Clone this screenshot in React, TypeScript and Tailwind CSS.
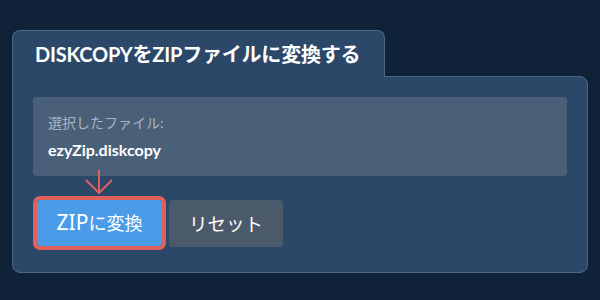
import React from "react";

const FONT = { fontFamily: "Lato, 'Noto Sans CJK JP', sans-serif" };
const BTN = { fontFamily: "'Noto Sans', 'Noto Sans CJK JP', sans-serif" };

export default function App() {
  return (
    <div className="h-[300px] w-[600px] bg-[#0f2238] pt-[30px] pl-[12px]" style={FONT}>
      <div className="w-[576px]">
        {/* tab */}
        <div className="relative z-10 -mb-px flex h-[47px] w-[373px] items-center rounded-t-lg border border-b-0 border-[#4c6787] bg-[#2c4868] pl-[22px]">
          <h1 className="text-[20px] font-bold tracking-[-0.2px] text-white">DISKCOPYをZIPファイルに変換する</h1>
        </div>
        {/* panel */}
        <div className="relative h-[197px] rounded-b-lg rounded-tr-lg border border-[#4c6787] bg-[#2c4868] px-[20px] pt-[20px]">
          <div className="flex h-[79px] flex-col justify-center rounded bg-[#4a5f78] px-[15px]">
            <p className="text-[14px] text-[#a9b5c4]">選択したファイル:</p>
            <p className="mt-[5px] text-[16px] font-bold text-white">ezyZip.diskcopy</p>
          </div>
          <svg className="absolute left-[71px] top-[93px]" width="30" height="25" viewBox="0 0 30 25" fill="none">
            <path d="M15 0 V23 M2 10 L15 23 L28 10" stroke="#e0605b" strokeWidth="2" />
          </svg>
          <div className="mt-[24px] flex gap-[7px] pl-[4px]" style={BTN}>
            <button className="flex h-[46px] w-[125px] items-center justify-center rounded-[3px] bg-[#4a9be8] text-[18px] text-white outline-[4px] outline-[#e0605b]">
              <span className="text-[21px]">ZIP</span>に変換
            </button>
            <button className="h-[47px] w-[114px] rounded bg-[#4b5a6b] text-[18.5px] text-white">リセット</button>
          </div>
        </div>
      </div>
    </div>
  );
}
